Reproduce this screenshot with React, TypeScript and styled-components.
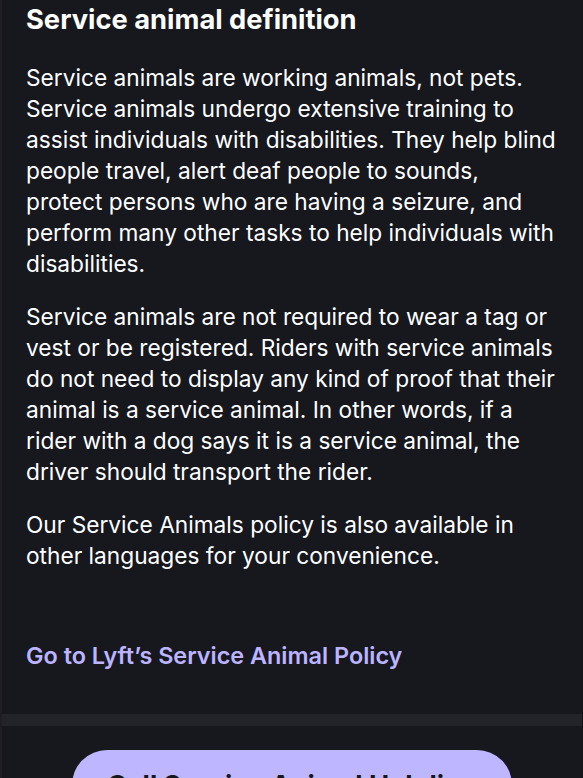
import React from "react";
import styled, { createGlobalStyle } from "styled-components";

const Global = createGlobalStyle`
  html, body {
    margin: 0;
    padding: 0;
    background: #17171e;
    overflow: hidden;
  }
  body {
    font-family: Inter, "Noto Sans", "Liberation Sans", sans-serif;
    -webkit-font-smoothing: antialiased;
  }
`;

const Sheet = styled.main`
  min-height: 778px;
  background: #17171e;
  border-left: 2px solid #1e1e24;
  border-right: 1px solid #121217;
  box-sizing: border-box;
  color: #ffffff;
`;

const Content = styled.section`
  padding: 3px 21px 0 24px;
`;

const Title = styled.h1`
  margin: 0 0 25px;
  font-size: 27.3px;
  line-height: 34px;
  font-weight: 700;
  color: #ffffff;
`;

const Paragraph = styled.p`
  margin: 0 0 22px;
  font-size: 22.7px;
  line-height: 31px;
  font-weight: 400;
  color: #ffffff;
`;

const PolicyLink = styled.a`
  display: block;
  margin-top: 69px;
  font-size: 23.4px;
  line-height: 31px;
  font-weight: 600;
  color: #bcb4ff;
  text-decoration: none;
`;

const Divider = styled.hr`
  margin: 43px 0 0;
  border: 0;
  height: 12px;
  background: #232429;
`;

const Footer = styled.footer`
  display: flex;
  justify-content: center;
  padding: 24px 0 24px;
`;

const PillButton = styled.button`
  width: 440px;
  height: 70px;
  padding: 0;
  border: 0;
  border-radius: 35px;
  background: #beb6ff;
  color: #16161c;
  font-family: Inter, "Noto Sans", sans-serif;
  font-size: 27px;
  font-weight: 700;
  cursor: pointer;
`;

export default function App() {
  return (
    <Sheet>
      <Global />
      <Content>
        <Title>Service animal definition</Title>
        <Paragraph>
          Service animals are working animals, not pets. Service animals undergo extensive training to
          assist individuals with disabilities. They help blind people travel, alert deaf people to
          sounds, protect persons who are having a seizure, and perform many other tasks to help
          individuals with disabilities.
        </Paragraph>
        <Paragraph>
          Service animals are not required to wear a tag or vest or be registered. Riders with service
          animals do not need to display any kind of proof that their animal is a service animal. In
          other words, if a rider with a dog says it is a service animal, the driver should transport
          the rider.
        </Paragraph>
        <Paragraph>
          Our Service Animals policy is also available in other languages for your convenience.
        </Paragraph>
        <PolicyLink href="#">Go to Lyft’s Service Animal Policy</PolicyLink>
      </Content>
      <Divider />
      <Footer>
        <PillButton type="button">Call Service Animal Helpline</PillButton>
      </Footer>
    </Sheet>
  );
}
